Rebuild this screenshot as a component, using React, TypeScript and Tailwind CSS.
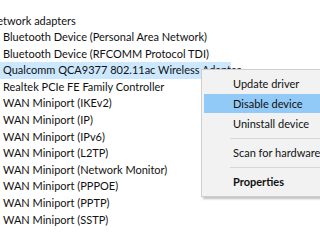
const adapters = [
  'Bluetooth Device (Personal Area Network)',
  'Bluetooth Device (RFCOMM Protocol TDI)',
  'Qualcomm QCA9377 802.11ac Wireless Adapter',
  'Realtek PCIe FE Family Controller',
  'WAN Miniport (IKEv2)',
  'WAN Miniport (IP)',
  'WAN Miniport (IPv6)',
  'WAN Miniport (L2TP)',
  'WAN Miniport (Network Monitor)',
  'WAN Miniport (PPPOE)',
  'WAN Miniport (PPTP)',
  'WAN Miniport (SSTP)',
]

export default function App() {
  return (
    <div
      className="relative w-[320px] h-[244px] overflow-hidden bg-white text-[11px] text-[#111]"
      style={{ fontFamily: 'Lato, "Noto Sans", sans-serif' }}
    >
      <div className="pt-[12.5px]">
        <div className="h-[16.6px] leading-[16.6px] whitespace-nowrap -ml-[11px]">Network adapters</div>
        {adapters.map((name) => (
          <div key={name} className="h-[16.6px] leading-[16.6px] whitespace-nowrap pl-[3px]">
            {name === adapters[2] ? (
              <span className="inline-block w-[231px] -ml-[3px] pl-[3px] bg-[#cce8ff]">{name}</span>
            ) : (
              name
            )}
          </div>
        ))}
      </div>

      <div className="absolute left-[201px] top-[69px] w-[140px] bg-[#f2f2f2] border border-[#cfcfcf] shadow-[2px_2px_2px_rgba(0,0,0,0.25)] py-[3px] pl-[2px]">
        <div className="h-[21px] leading-[21px] pl-[29px] whitespace-nowrap">Update driver</div>
        <div className="h-[19px] leading-[19px] pl-[29px] whitespace-nowrap bg-[#91c9f7]">Disable device</div>
        <div className="h-[22px] leading-[22px] pl-[29px] whitespace-nowrap">Uninstall device</div>
        <div className="my-[3px] ml-[26px] h-px bg-[#d7d7d7]" />
        <div className="h-[22px] leading-[22px] pl-[29px] whitespace-nowrap">Scan for hardware changes</div>
        <div className="my-[3px] ml-[26px] h-px bg-[#d7d7d7]" />
        <div className="h-[22px] leading-[22px] pl-[29px] whitespace-nowrap font-bold">Properties</div>
      </div>
    </div>
  )
}
